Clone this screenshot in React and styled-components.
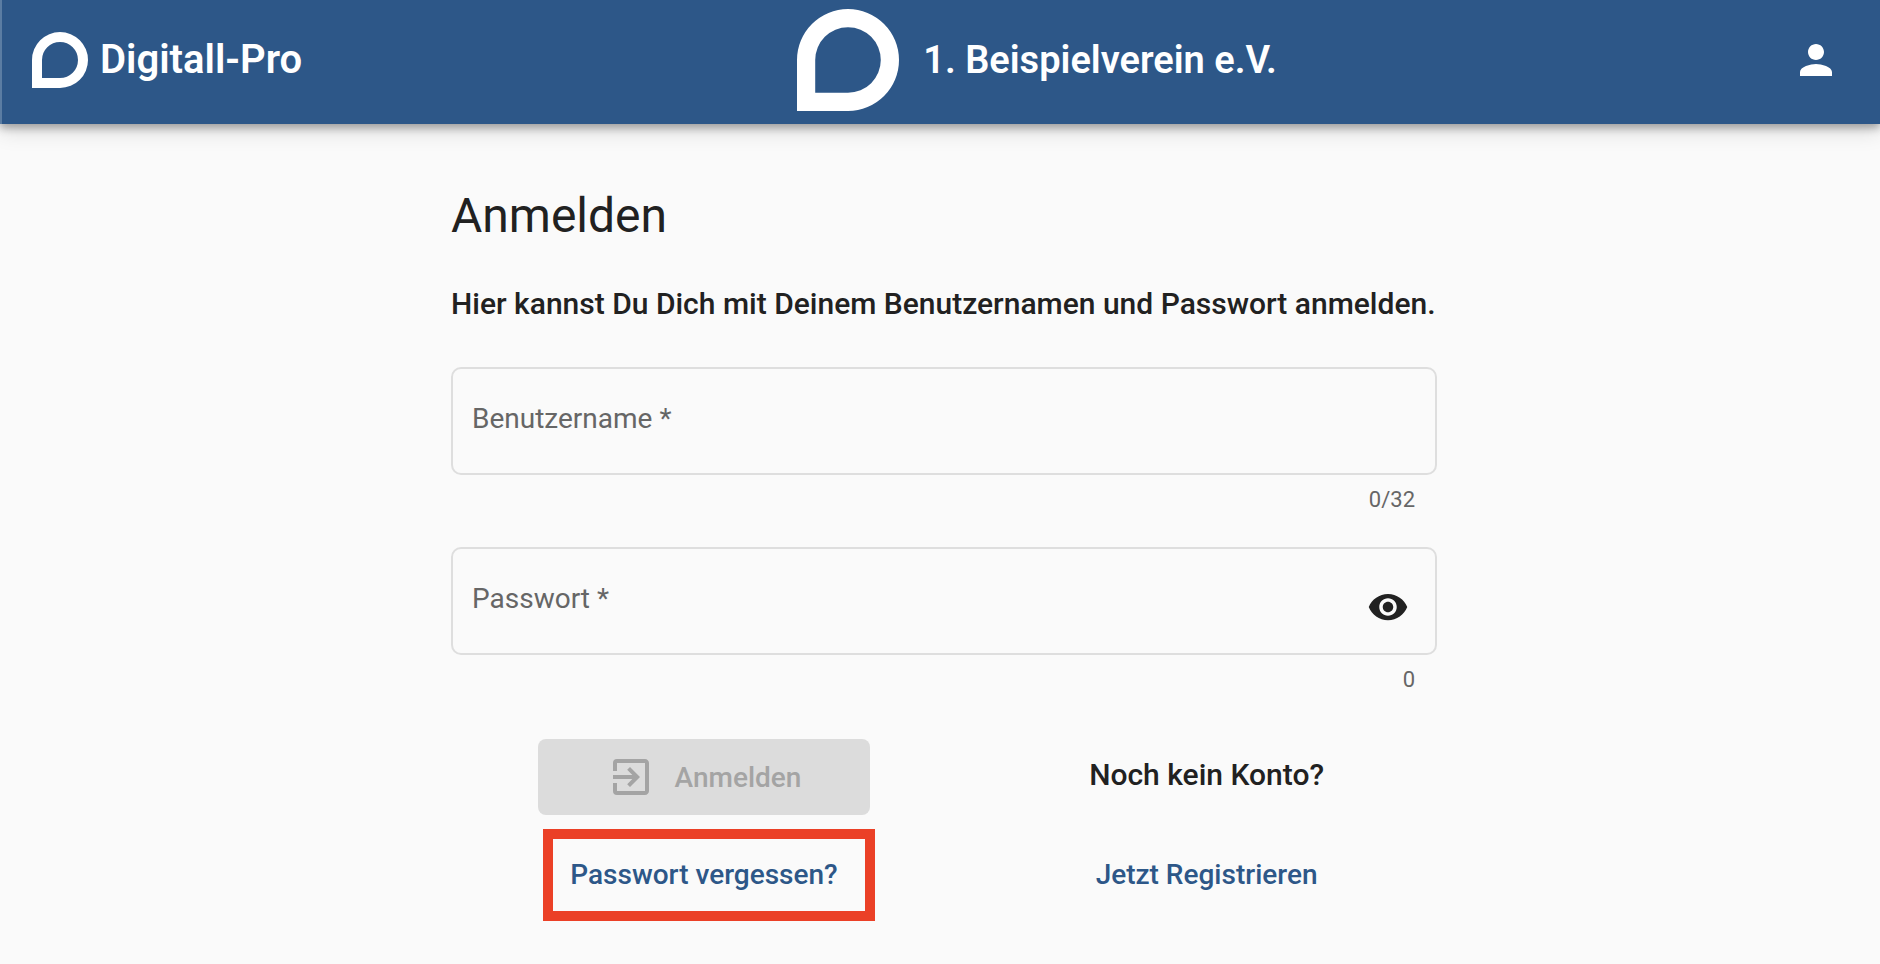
import React, { useState } from 'react';
import styled, { createGlobalStyle } from 'styled-components';
import { MdPerson, MdVisibility, MdExitToApp } from 'react-icons/md';

const GlobalStyle = createGlobalStyle`
  *, *::before, *::after { box-sizing: border-box; }
  body {
    margin: 0;
    background: #fafafa;
    color: #212121;
    font-family: Roboto, sans-serif;
  }
  h1, h2, p { margin: 0; }
`;

const Toolbar = styled.header`
  display: flex;
  align-items: center;
  justify-content: space-between;
  height: 124px;
  padding: 0 20px 4px 30px;
  border-left: 2px solid #5b7da3;
  background: #2d5788;
  color: #fff;
  box-shadow: 0 4px 8px rgba(0, 0, 0, 0.3), 0 8px 20px rgba(0, 0, 0, 0.12);
`;

const Brand = styled.div`
  display: flex;
  align-items: center;
  gap: ${(p) => p.$gap}px;
  font-size: ${(p) => p.$fontSize}px;
  line-height: 48px;
  font-weight: 600;
  white-space: nowrap;
`;

const LogoSvg = styled.svg`
  display: block;
  width: ${(p) => p.$size}px;
  height: ${(p) => p.$size}px;
  fill: currentColor;
`;

const AccountButton = styled.button`
  display: flex;
  justify-content: center;
  width: 88px;
  padding: 16px;
  border: 0;
  background: none;
  color: inherit;
  cursor: pointer;
`;

const Main = styled.main`
  width: 994px;
  max-width: 100%;
  margin: 0 auto;
  padding: 60px 0 40px 8px;
`;

const Title = styled.h1`
  font-size: 48px;
  line-height: 64px;
  font-weight: 400;
`;

const Intro = styled.p`
  margin: 36px 0 43px;
  font-size: 30px;
  line-height: 40px;
  font-weight: 500;
`;

const Field = styled.div`
  position: relative;
  display: flex;
  align-items: center;
  height: 108px;
  border: 2px solid #dedede;
  border-radius: 10px;
`;

const FieldLabel = styled.label`
  position: absolute;
  left: 19px;
  top: 34px;
  font-size: 28px;
  line-height: 32px;
  color: #666;
  pointer-events: none;
`;

const Input = styled.input`
  flex: 1;
  min-width: 0;
  align-self: stretch;
  padding: 0 20px;
  border: 0;
  outline: 0;
  background: transparent;
  color: inherit;
  font: inherit;
  font-size: 28px;
`;

const EyeButton = styled.button`
  display: flex;
  margin: 12px 26px 0 0;
  padding: 0;
  border: 0;
  background: none;
  color: #212121;
  cursor: pointer;
`;

const Counter = styled.p`
  height: 72px;
  padding: 12px 22px 0 0;
  font-size: 22px;
  line-height: 26px;
  text-align: right;
  color: #666;
`;

const Actions = styled.div`
  display: flex;
  justify-content: space-between;
  padding: 12px 113px 0 87px;
`;

const ActionColumn = styled.div`
  display: flex;
  flex-direction: column;
  align-items: center;
`;

const SubmitButton = styled.button`
  display: flex;
  align-items: center;
  justify-content: center;
  gap: 20px;
  width: 332px;
  height: 76px;
  padding: 0;
  border: 0;
  border-radius: 8px;
  background: #dcdcdc;
  color: #a4a4a4;
  font: inherit;
  font-size: 28px;
  font-weight: 500;
`;

const ActionText = styled.h2`
  height: 76px;
  font-size: 30px;
  line-height: 72px;
  font-weight: 500;
`;

const ActionLink = styled.a`
  position: relative;
  margin-top: 44px;
  font-size: 28px;
  line-height: 32px;
  font-weight: 500;
  color: #2d5788;
  text-decoration: none;
`;

const Highlight = styled.span`
  position: absolute;
  inset: -30px -37px -30px -27px;
  border: 10px solid #eb4026;
  pointer-events: none;
`;

function Logo({ size }) {
  return (
    <LogoSvg $size={size} viewBox="0 0 56 56" aria-hidden="true">
      <path
        fillRule="evenodd"
        d="M0 56V28A28 28 0 0 1 28 0A28 28 0 0 1 56 28A28 28 0 0 1 28 56ZM10 46H28A18 18 0 0 0 46 28A18 18 0 0 0 28 10A18 18 0 0 0 10 28Z"
      />
    </LogoSvg>
  );
}

export default function App() {
  const [user, setUser] = useState('');
  const [password, setPassword] = useState('');
  const [visible, setVisible] = useState(false);

  return (
    <>
      <GlobalStyle />
      <Toolbar>
        <Brand $gap={12} $fontSize={40}>
          <Logo size={56} />
          <span>Digitall-Pro</span>
        </Brand>
        <Brand $gap={24} $fontSize={38}>
          <Logo size={102} />
          <span>1. Beispielverein e.V.</span>
        </Brand>
        <AccountButton type="button" aria-label="Konto">
          <MdPerson size={48} />
        </AccountButton>
      </Toolbar>
      <Main>
        <Title>Anmelden</Title>
        <Intro>Hier kannst Du Dich mit Deinem Benutzernamen und Passwort anmelden.</Intro>
        <form onSubmit={(e) => e.preventDefault()}>
          <Field>
            {!user && <FieldLabel htmlFor="user">Benutzername *</FieldLabel>}
            <Input
              id="user"
              aria-label="Benutzername"
              maxLength={32}
              value={user}
              onChange={(e) => setUser(e.target.value)}
            />
          </Field>
          <Counter>{user.length}/32</Counter>
          <Field>
            {!password && <FieldLabel htmlFor="password">Passwort *</FieldLabel>}
            <Input
              id="password"
              aria-label="Passwort"
              type={visible ? 'text' : 'password'}
              value={password}
              onChange={(e) => setPassword(e.target.value)}
            />
            <EyeButton type="button" aria-label="Passwort anzeigen" onClick={() => setVisible(!visible)}>
              <MdVisibility size={42} />
            </EyeButton>
          </Field>
          <Counter>{password.length}</Counter>
          <Actions>
            <ActionColumn>
              <SubmitButton type="submit" disabled={!user || !password}>
                <MdExitToApp size={48} />
                Anmelden
              </SubmitButton>
              <ActionLink href="#passwort">
                Passwort vergessen?
                <Highlight />
              </ActionLink>
            </ActionColumn>
            <ActionColumn>
              <ActionText>Noch kein Konto?</ActionText>
              <ActionLink href="#registrieren">Jetzt Registrieren</ActionLink>
            </ActionColumn>
          </Actions>
        </form>
      </Main>
    </>
  );
}
